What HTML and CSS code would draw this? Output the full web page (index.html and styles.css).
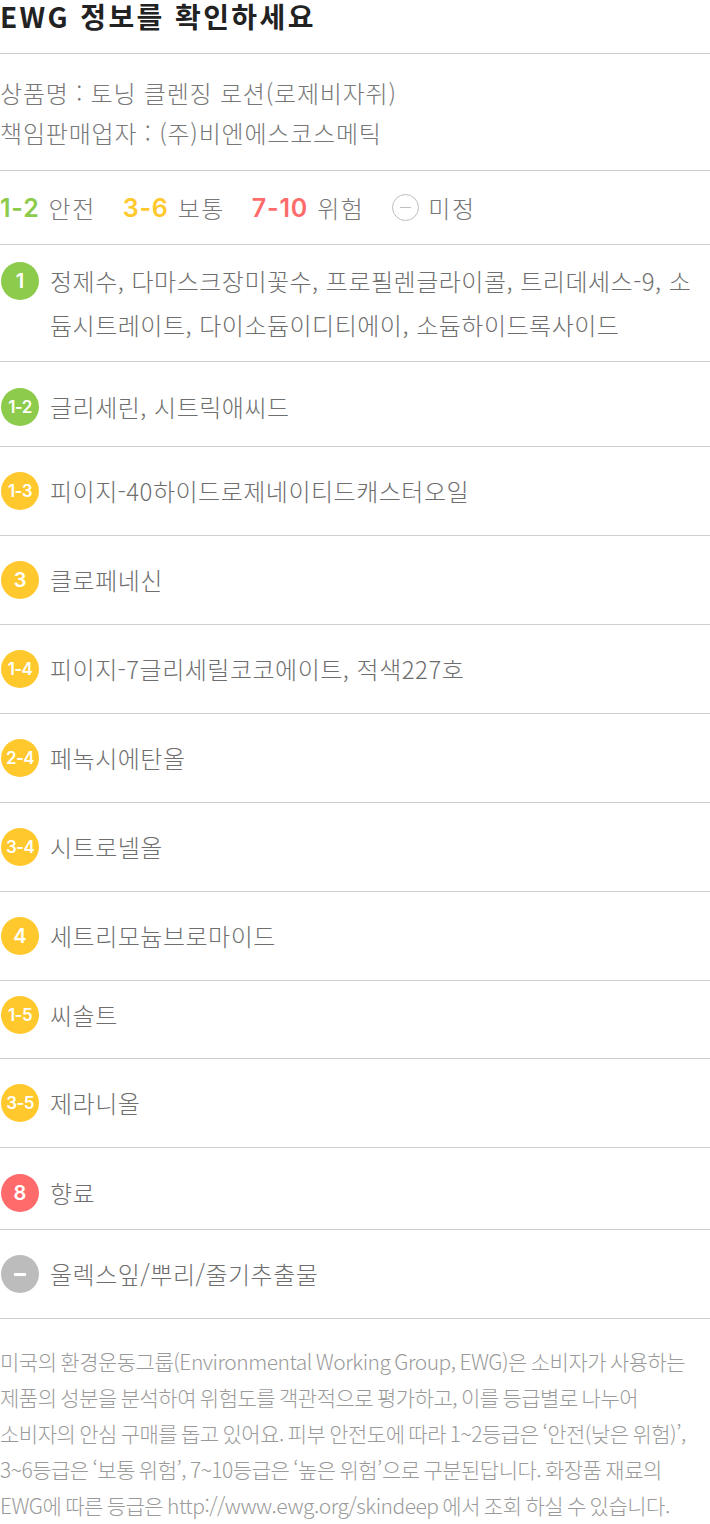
FILE: index.html
```html
<!DOCTYPE html>
<html lang="ko">
<head>
<meta charset="utf-8">
<title>EWG 정보</title>
<link rel="stylesheet" href="styles.css">
</head>
<body>
<div class="ewg">
  <h1 class="title">EWG 정보를 확인하세요</h1>

  <div class="info">
    <p class="info-line">상품명 : 토닝 클렌징 로션(로제비자쥐)</p>
    <p class="info-line">책임판매업자 : (주)비엔에스코스메틱</p>
  </div>

  <div class="legend">
    <span class="legend-item"><b class="num green">1-2</b>안전</span>
    <span class="legend-item"><b class="num yellow">3-6</b>보통</span>
    <span class="legend-item"><b class="num red">7-10</b>위험</span>
    <span class="legend-item"><i class="undef-icon"></i>미정</span>
  </div>

  <ul class="list">
    <li class="row row-multi"><span class="badge green">1</span><p class="name">정제수, 다마스크장미꽃수, 프로필렌글라이콜, 트리데세스-9, 소듐시트레이트, 다이소듐이디티에이, 소듐하이드록사이드</p></li>
    <li class="row row-a"><span class="badge green small">1-2</span><p class="name">글리세린, 시트릭애씨드</p></li>
    <li class="row"><span class="badge yellow small">1-3</span><p class="name">피이지-40하이드로제네이티드캐스터오일</p></li>
    <li class="row"><span class="badge yellow">3</span><p class="name">클로페네신</p></li>
    <li class="row"><span class="badge yellow small">1-4</span><p class="name">피이지-7글리세릴코코에이트, 적색227호</p></li>
    <li class="row"><span class="badge yellow small">2-4</span><p class="name">페녹시에탄올</p></li>
    <li class="row"><span class="badge yellow small">3-4</span><p class="name">시트로넬올</p></li>
    <li class="row"><span class="badge yellow">4</span><p class="name">세트리모늄브로마이드</p></li>
    <li class="row row-b"><span class="badge yellow small">1-5</span><p class="name">씨솔트</p></li>
    <li class="row"><span class="badge yellow small">3-5</span><p class="name">제라니올</p></li>
    <li class="row row-c"><span class="badge red">8</span><p class="name">향료</p></li>
    <li class="row"><span class="badge gray"><i class="dash"></i></span><p class="name">울렉스잎/뿌리/줄기추출물</p></li>
  </ul>

  <p class="note">미국의 환경운동그룹(Environmental Working Group, EWG)은 소비자가 사용하는 제품의 성분을 분석하여 위험도를 객관적으로 평가하고, 이를 등급별로 나누어 소비자의 안심 구매를 돕고 있어요. 피부 안전도에 따라 1~2등급은 ‘안전(낮은 위험)’, 3~6등급은 ‘보통 위험’, 7~10등급은 ‘높은 위험’으로 구분된답니다. 화장품 재료의 EWG에 따른 등급은 http://www.ewg.org/skindeep 에서 조회 하실 수 있습니다.</p>
</div>
</body>
</html>
```

FILE: styles.css
```css
* { box-sizing: border-box; }

body {
  margin: 0;
  background: #fff;
  font-family: "Noto Sans CJK KR", "Noto Sans", sans-serif;
  color: #6e6e6e;
}

.ewg {
  width: 710px;
}

.title {
  margin: 0;
  height: 54px;
  font-size: 28px;
  line-height: 32px;
  font-weight: 700;
  color: #222;
  border-bottom: 1px solid #cfcfcf;
  letter-spacing: 2.4px;
}

.info {
  padding: 19px 0 17px;
  border-bottom: 1px solid #cfcfcf;
}

.info-line {
  margin: 0;
  font-size: 24px;
  line-height: 40px;
  font-weight: 300;
  color: #777;
  letter-spacing: 0.8px;
}

.legend {
  height: 74px;
  display: flex;
  align-items: center;
  gap: 27px;
  border-bottom: 1px solid #cfcfcf;
  font-size: 24px;
  font-weight: 300;
  color: #777;
  letter-spacing: 1.5px;
}

.legend-item {
  display: flex;
  align-items: center;
  gap: 9px;
}

.num {
  font-family: Inter, "Noto Sans", sans-serif;
  font-weight: 600;
  font-size: 25px;
  letter-spacing: 0.8px;
}

.num.green { color: #8dcb4c; }
.num.yellow { color: #ffc82c; }
.num.red { color: #ff6b6b; }

.undef-icon {
  width: 27px;
  height: 27px;
  border: 1.5px solid #bdbdbd;
  border-radius: 50%;
  display: flex;
  align-items: center;
  justify-content: center;
  margin-left: 1px;
}

.undef-icon::before {
  content: "";
  width: 11px;
  height: 1.5px;
  background: #bdbdbd;
}

.list {
  list-style: none;
  margin: 0;
  padding: 0;
}

.row {
  display: flex;
  align-items: flex-start;
  gap: 11px;
  padding: 22px 0 22px 1px;
  border-bottom: 1px solid #cfcfcf;
}

.row-multi { padding-top: 14px; padding-bottom: 14px; }
.row-a { padding-top: 23px; padding-bottom: 17px; }
.row-b { padding-top: 12px; padding-bottom: 21px; }
.row-c { padding-top: 23px; padding-bottom: 14px; }

.badge {
  flex: none;
  width: 38px;
  height: 38px;
  margin-top: 3px;
  border-radius: 50%;
  display: flex;
  align-items: center;
  justify-content: center;
  color: #fff;
  font-family: Inter, "Noto Sans", sans-serif;
  font-weight: 600;
  font-size: 20px;
}

.badge.small {
  font-size: 17px;
  letter-spacing: -0.6px;
}

.badge.green { background: #8dcb4c; }
.badge.yellow { background: #ffc82c; }
.badge.red { background: #ff6b6b; }
.badge.gray { background: #bcbcbc; }

.dash {
  width: 12px;
  height: 3px;
  background: #fff;
}

.name {
  margin: 0;
  flex: 1;
  font-size: 24px;
  line-height: 44px;
  font-weight: 300;
  color: #6e6e6e;
  letter-spacing: 0.5px;
}

.note {
  margin: 0;
  padding-top: 24px;
  font-size: 21px;
  line-height: 36px;
  font-weight: 300;
  color: #9a9a9a;
  letter-spacing: -0.5px;
  word-spacing: -1.5px;
  word-break: keep-all;
}
```
